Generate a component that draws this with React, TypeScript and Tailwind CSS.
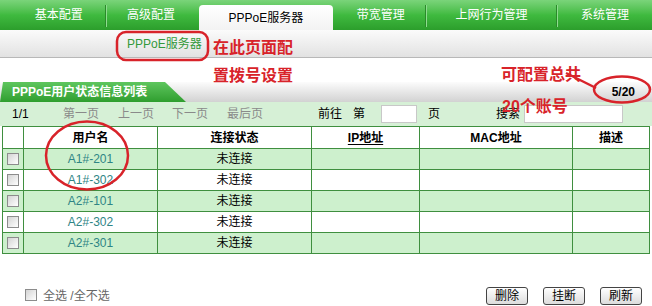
import React from "react";

const FONT = { fontFamily: '"Liberation Sans", "Noto Sans CJK SC", sans-serif' };

function Box() {
  return (
    <span className="inline-block w-[12px] h-[12px] border border-[#8c8c8c] bg-gradient-to-br from-[#d4d4d4] to-[#ffffff]" />
  );
}

const rows = [
  { name: "A1#-201", green: true },
  { name: "A1#-302", green: false },
  { name: "A2#-101", green: true },
  { name: "A2#-302", green: false },
  { name: "A2#-301", green: true },
];

const cellB = "border-r border-[#3f8f3f] flex items-center justify-center";

export default function App() {
  return (
    <div className="relative w-[652px] h-[306px] overflow-hidden bg-white text-[12px] leading-none text-black" style={FONT}>
      {/* top tab bar */}
      <div className="flex items-end h-[30px] bg-gradient-to-b from-[#7ad47a] via-[#3fba3f] to-[#2c9e2c]">
        <div className="w-[13px]" />
        <div className="w-[95px] h-[30px] flex items-center justify-center text-white">基本配置</div>
        <div className="w-[2px] h-[22px] mb-[3px] flex"><span className="w-[1px] bg-[#2a8a2a]" /><span className="w-[1px] bg-[#8fdc8f]" /></div>
        <div className="w-[91px] h-[30px] flex items-center justify-center text-white">高级配置</div>
        <div className="w-[4px]" />
        <div className="w-[138px] h-[25px] rounded-t-[4px] bg-gradient-to-b from-[#ffffff] to-[#f3f3f3] flex items-center justify-center text-black">PPPoE服务器</div>
        <div className="w-[4px]" />
        <div className="w-[91px] h-[30px] flex items-center justify-center text-white">带宽管理</div>
        <div className="w-[2px] h-[22px] mb-[3px] flex"><span className="w-[1px] bg-[#2a8a2a]" /><span className="w-[1px] bg-[#8fdc8f]" /></div>
        <div className="w-[133px] h-[30px] flex items-center justify-center text-white">上网行为管理</div>
        <div className="w-[2px] h-[22px] mb-[3px] flex"><span className="w-[1px] bg-[#2a8a2a]" /><span className="w-[1px] bg-[#8fdc8f]" /></div>
        <div className="w-[94px] shrink-0 h-[30px] flex items-center justify-center text-white">系统管理</div>
      </div>

      {/* sub nav */}
      <div className="h-[28px] flex items-center bg-gradient-to-b from-[#fbfbfb] to-[#e2e2e2] border-b border-[#b8b8b8]">
        <span className="ml-[127px] text-[#33993a]">PPPoE服务器</span>
      </div>

      <div className="h-[24px]" />

      {/* title bar */}
      <div className="h-[20px] flex items-stretch bg-gradient-to-b from-[#fcfcfc] to-[#d2d2d2]">
        <div className="w-[186px] flex items-center pl-[12px] text-white font-bold bg-gradient-to-b from-[#5ec65e] to-[#2e9e2e] [clip-path:polygon(3px_0,165px_0,186px_100%,0_100%)]">
          PPPoE用户状态信息列表
        </div>
        <div className="flex-1 flex items-center justify-end pr-[17px] font-bold">5/20</div>
      </div>

      {/* pagination */}
      <div className="h-[24px] flex items-center bg-[#d6f0d6]">
        <span className="w-[63px] pl-[12px]">1/1</span>
        <span className="w-[55px] text-[#8a8a8a]">第一页</span>
        <span className="w-[54px] text-[#8a8a8a]">上一页</span>
        <span className="w-[55px] text-[#8a8a8a]">下一页</span>
        <span className="w-[91px] text-[#8a8a8a]">最后页</span>
        <span className="w-[35px]">前往</span>
        <span className="w-[28px]">第</span>
        <span className="w-[36px] h-[18px] bg-white border border-[#c8c8c8]" />
        <span className="w-[11px]" />
        <span className="w-[68px]">页</span>
        <span className="w-[28px]">搜索</span>
        <span className="w-[99px] h-[18px] bg-white border border-[#c8c8c8]" />
      </div>

      {/* table */}
      <div className="ml-[2px] w-[648px] border-l border-t border-[#3f8f3f]">
        <div className="flex h-[22px] border-b border-[#3f8f3f] bg-white font-bold">
          <div className={`w-[21px] ${cellB}`} />
          <div className={`w-[134px] ${cellB}`}>用户名</div>
          <div className={`w-[154px] ${cellB}`}>连接状态</div>
          <div className={`w-[108px] ${cellB}`}><span className="underline underline-offset-2">IP地址</span></div>
          <div className={`w-[153px] ${cellB}`}>MAC地址</div>
          <div className={`w-[77px] ${cellB}`}>描述</div>
        </div>
        {rows.map((r) => (
          <div key={r.name} className={`flex h-[21px] border-b border-[#3f8f3f] ${r.green ? "bg-[#cdf0cd]" : "bg-white"}`}>
            <div className={`w-[21px] ${cellB}`}><Box /></div>
            <div className={`w-[134px] ${cellB} text-[#2f8585]`}>{r.name}</div>
            <div className={`w-[154px] ${cellB}`}>未连接</div>
            <div className={`w-[108px] ${cellB}`} />
            <div className={`w-[153px] ${cellB}`} />
            <div className={`w-[77px] ${cellB}`} />
          </div>
        ))}
      </div>

      {/* bottom bar */}
      <div className="mt-[33px] flex items-center h-[18px]">
        <span className="ml-[25px]"><Box /></span>
        <span className="ml-[6px] text-[#666]">全选 /全不选</span>
        <div className="ml-auto mr-[10px] flex gap-[15px]">
          {["删除", "挂断", "刷新"].map((t) => (
            <button key={t} className="w-[42px] h-[18px] border border-[#444] rounded-[3px] bg-gradient-to-b from-[#ffffff] to-[#dcdcdc] text-[12px] leading-none flex items-center justify-center">
              {t}
            </button>
          ))}
        </div>
      </div>

      {/* red annotations */}
      <svg className="absolute inset-0 pointer-events-none" width="652" height="306">
        <rect x="117" y="32" width="91" height="28" rx="9" fill="none" stroke="#d8232a" strokeWidth="2.5" />
        <ellipse cx="87" cy="155.5" rx="41" ry="34" fill="none" stroke="#d8232a" strokeWidth="2.5" />
        <ellipse cx="622" cy="89.5" rx="28" ry="13" fill="none" stroke="#d8232a" strokeWidth="2.5" />
        <line x1="566" y1="73" x2="596" y2="88" stroke="#d8232a" strokeWidth="2.5" />
      </svg>
      <span className="absolute left-[213px] top-[39px] text-[16px] leading-[18px] font-bold text-[#d8232a]">在此页面配</span>
      <span className="absolute left-[213px] top-[67px] text-[16px] leading-[18px] font-bold text-[#d8232a]">置拨号设置</span>
      <span className="absolute left-[501px] top-[66px] text-[16px] leading-[18px] font-bold text-[#d8232a]">可配置总共</span>
      <span className="absolute left-[502px] top-[98px] text-[16px] leading-[18px] font-bold text-[#d8232a]">20个账号</span>
    </div>
  );
}
